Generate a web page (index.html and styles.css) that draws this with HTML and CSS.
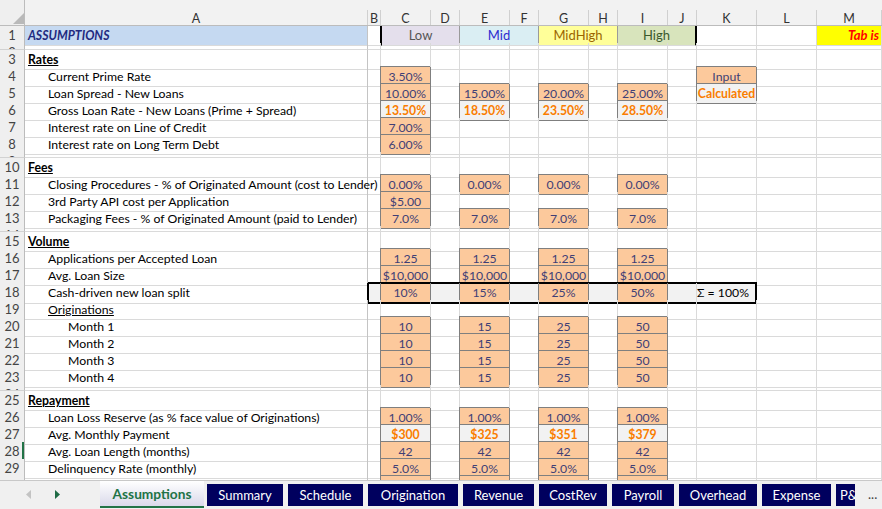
FILE: index.html
```html
<!DOCTYPE html>
<html lang="en">
<head>
  <meta charset="UTF-8">
  <title>Assumptions</title>
  <link rel="stylesheet" href="styles.css">
</head>
<body>
  <div class="sheet">
    <div class="row hdr">
      <span class="corner"><svg width="25" height="25" viewBox="0 0 25 25"><polygon points="13,24 24,24 24,13" fill="#b9b9b9"/></svg></span>
      <span>A</span><span>B</span><span>C</span><span>D</span><span>E</span><span>F</span><span>G</span><span>H</span><span>I</span><span>J</span><span>K</span><span>L</span><span>M</span>
    </div>

    <div class="row">
      <span>1</span><span class="title">ASSUMPTIONS</span><span></span>
      <span class="lo">Low</span><span class="mid">Mid</span><span class="midhigh">MidHigh</span><span class="high">High</span>
      <span></span><span></span><span class="note">Tab is for inputs</span>
    </div>
    <div class="row tiny first"><span>2</span><span></span><span></span><span></span><span></span><span></span><span></span><span></span><span></span><span></span><span></span><span></span><span></span><span></span></div>

    <!-- Rates -->
    <div class="row"><span>3</span><span class="h">Rates</span><span></span><span></span><span></span><span></span><span></span><span></span><span></span><span></span><span></span><span></span><span></span><span></span></div>
    <div class="row"><span>4</span><span class="l1">Current Prime Rate</span><span></span><span class="in">3.50%</span><span></span><span></span><span></span><span></span><span></span><span></span><span></span><span class="in">Input</span><span></span><span></span></div>
    <div class="row"><span>5</span><span class="l1">Loan Spread - New Loans</span><span></span><span class="in">10.00%</span><span></span><span class="in">15.00%</span><span></span><span class="in">20.00%</span><span></span><span class="in">25.00%</span><span></span><span class="calc">Calculated</span><span></span><span></span></div>
    <div class="row"><span>6</span><span class="l1">Gross Loan Rate - New Loans (Prime + Spread)</span><span></span><span class="calc">13.50%</span><span></span><span class="calc">18.50%</span><span></span><span class="calc">23.50%</span><span></span><span class="calc">28.50%</span><span></span><span></span><span></span><span></span></div>
    <div class="row"><span>7</span><span class="l1">Interest rate on Line of Credit</span><span></span><span class="in">7.00%</span><span></span><span></span><span></span><span></span><span></span><span></span><span></span><span></span><span></span><span></span></div>
    <div class="row"><span>8</span><span class="l1">Interest rate on Long Term Debt</span><span></span><span class="in">6.00%</span><span></span><span></span><span></span><span></span><span></span><span></span><span></span><span></span><span></span><span></span></div>
    <div class="row tiny"><span>9</span><span></span><span></span><span></span><span></span><span></span><span></span><span></span><span></span><span></span><span></span><span></span><span></span><span></span></div>

    <!-- Fees -->
    <div class="row"><span>10</span><span class="h">Fees</span><span></span><span></span><span></span><span></span><span></span><span></span><span></span><span></span><span></span><span></span><span></span><span></span></div>
    <div class="row"><span>11</span><span class="l1">Closing Procedures - % of Originated Amount (cost to Lender)</span><span></span><span class="in">0.00%</span><span></span><span class="in">0.00%</span><span></span><span class="in">0.00%</span><span></span><span class="in">0.00%</span><span></span><span></span><span></span><span></span></div>
    <div class="row"><span>12</span><span class="l1">3rd Party API cost per Application</span><span></span><span class="in">$5.00</span><span></span><span></span><span></span><span></span><span></span><span></span><span></span><span></span><span></span><span></span></div>
    <div class="row"><span>13</span><span class="l1">Packaging Fees - % of Originated Amount (paid to Lender)</span><span></span><span class="in">7.0%</span><span></span><span class="in">7.0%</span><span></span><span class="in">7.0%</span><span></span><span class="in">7.0%</span><span></span><span></span><span></span><span></span></div>
    <div class="row tiny"><span>14</span><span></span><span></span><span></span><span></span><span></span><span></span><span></span><span></span><span></span><span></span><span></span><span></span><span></span></div>

    <!-- Volume -->
    <div class="row"><span>15</span><span class="h">Volume</span><span></span><span></span><span></span><span></span><span></span><span></span><span></span><span></span><span></span><span></span><span></span><span></span></div>
    <div class="row"><span>16</span><span class="l1">Applications per Accepted Loan</span><span></span><span class="in">1.25</span><span></span><span class="in">1.25</span><span></span><span class="in">1.25</span><span></span><span class="in">1.25</span><span></span><span></span><span></span><span></span></div>
    <div class="row"><span>17</span><span class="l1">Avg. Loan Size</span><span></span><span class="in">$10,000</span><span></span><span class="in">$10,000</span><span></span><span class="in">$10,000</span><span></span><span class="in">$10,000</span><span></span><span></span><span></span><span></span></div>
    <div class="row"><span>18</span><span class="l1">Cash-driven new loan split</span><span class="g box bl"></span><span class="in box">10%</span><span class="g box"></span><span class="in box">15%</span><span class="g box"></span><span class="in box">25%</span><span class="g box"></span><span class="in box">50%</span><span class="g box"></span><span class="g box br">&Sigma; = 100%</span><span></span><span></span></div>
    <div class="row"><span>19</span><span class="l1 u">Originations</span><span></span><span></span><span></span><span></span><span></span><span></span><span></span><span></span><span></span><span></span><span></span><span></span></div>
    <div class="row"><span>20</span><span class="l2">Month 1</span><span></span><span class="in">10</span><span></span><span class="in">15</span><span></span><span class="in">25</span><span></span><span class="in">50</span><span></span><span></span><span></span><span></span></div>
    <div class="row"><span>21</span><span class="l2">Month 2</span><span></span><span class="in">10</span><span></span><span class="in">15</span><span></span><span class="in">25</span><span></span><span class="in">50</span><span></span><span></span><span></span><span></span></div>
    <div class="row"><span>22</span><span class="l2">Month 3</span><span></span><span class="in">10</span><span></span><span class="in">15</span><span></span><span class="in">25</span><span></span><span class="in">50</span><span></span><span></span><span></span><span></span></div>
    <div class="row"><span>23</span><span class="l2">Month 4</span><span></span><span class="in">10</span><span></span><span class="in">15</span><span></span><span class="in">25</span><span></span><span class="in">50</span><span></span><span></span><span></span><span></span></div>
    <div class="row tiny"><span>24</span><span></span><span></span><span></span><span></span><span></span><span></span><span></span><span></span><span></span><span></span><span></span><span></span><span></span></div>

    <!-- Repayment -->
    <div class="row"><span>25</span><span class="h">Repayment</span><span></span><span></span><span></span><span></span><span></span><span></span><span></span><span></span><span></span><span></span><span></span><span></span></div>
    <div class="row"><span>26</span><span class="l1">Loan Loss Reserve (as % face value of Originations)</span><span></span><span class="in">1.00%</span><span></span><span class="in">1.00%</span><span></span><span class="in">1.00%</span><span></span><span class="in">1.00%</span><span></span><span></span><span></span><span></span></div>
    <div class="row"><span>27</span><span class="l1">Avg. Monthly Payment</span><span></span><span class="calc">$300</span><span></span><span class="calc">$325</span><span></span><span class="calc">$351</span><span></span><span class="calc">$379</span><span></span><span></span><span></span><span></span></div>
    <div class="row"><span class="sel">28</span><span class="l1">Avg. Loan Length (months)</span><span></span><span class="in">42</span><span></span><span class="in">42</span><span></span><span class="in">42</span><span></span><span class="in">42</span><span></span><span></span><span></span><span></span></div>
    <div class="row"><span>29</span><span class="l1">Delinquency Rate (monthly)</span><span></span><span class="in">5.0%</span><span></span><span class="in">5.0%</span><span></span><span class="in">5.0%</span><span></span><span class="in">5.0%</span><span></span><span></span><span></span><span></span></div>
    <div class="row last"><span></span><span></span><span></span><span class="in"></span><span></span><span class="in"></span><span></span><span class="in"></span><span></span><span class="in"></span><span></span><span></span><span></span><span></span></div>
  </div>

  <div class="tabs">
    <span class="nav">
      <svg width="6" height="9" viewBox="0 0 6 9"><polygon points="5,0 5,9 0,4.5" fill="#c3c3c3"/></svg>
      <svg width="6" height="9" viewBox="0 0 6 9"><polygon points="0,0 0,9 5,4.5" fill="#1f6b45"/></svg>
    </span>
    <span class="tab active">Assumptions</span>
    <span class="tab">Summary</span>
    <span class="tab">Schedule</span>
    <span class="tab">Origination</span>
    <span class="tab">Revenue</span>
    <span class="tab">CostRev</span>
    <span class="tab">Payroll</span>
    <span class="tab">Overhead</span>
    <span class="tab">Expense</span>
    <span class="tab cut">P&amp;L</span>
    <span class="more">...</span>
  </div>
</body>
</html>
```

FILE: styles.css
```css
body {
  margin: 0;
  width: 882px;
  height: 509px;
  overflow: hidden;
  background: #fff;
  font-family: Lato, "Liberation Sans", sans-serif;
  font-size: 12.25px;
  color: #000;
}
.sheet {
  height: 480px;
  overflow: hidden;
}
.row {
  display: grid;
  grid-template-columns: 25px 343px 13px 50px 29px 50px 29px 50px 29px 50px 29px 60px 60px 65px;
  height: 17px;
}
.row > span {
  box-sizing: border-box;
  border-right: 1px solid #dadada;
  border-bottom: 1px solid #dadada;
  line-height: 19px;
  white-space: nowrap;
  text-align: center;
}
.row > span:first-child {
  background: #efefef;
  color: #444;
  font-size: 13px;
  border-right-color: #bcbcbc;
  border-bottom-color: #d2d2d2;
  overflow: hidden;
}
.row > span:nth-child(2) {
  border-right-color: #c4c4c4;
}
.row.tiny {
  height: 6px;
}
.row.tiny.first {
  height: 7px;
}
.row.tiny > span,
.row.last > span {
  overflow: hidden;
}
.row.last {
  height: 5px;
}
.row.last > span {
  border-bottom: none;
}

/* column letters */
.hdr {
  height: 26px;
  box-sizing: border-box;
  background: #f2f2f2;
  border-bottom: 1px solid #bcbcbc;
}
.hdr > span {
  align-self: end;
  height: 15px;
  line-height: 17px;
  border-bottom: none;
  border-right-color: #d0d0d0;
  color: #333;
  font-size: 12.5px;
}
.hdr > span:nth-child(2) {
  border-right-color: #d0d0d0;
}
.hdr > .corner {
  align-self: stretch;
  height: auto;
  background: #f2f2f2;
  border-bottom: none;
}
.corner svg {
  display: block;
}

/* row 1 */
.title,
.h,
.l1,
.l2 {
  text-align: left !important;
  padding-left: 3px;
}
.title {
  background: #c5d9f1;
  color: #1f2a80;
  font-weight: bold;
  font-style: italic;
}
.lo,
.mid,
.midhigh,
.high {
  grid-column: span 2;
  border-right-color: #9a9a9a !important;
  font-size: 13px;
}
.lo {
  background: #e4dfec;
  color: #555;
  border-left: 1px solid #000;
  box-shadow: -1px 0 #000;
}
.mid {
  background: #daeef3;
  color: #2b2bd0;
}
.midhigh {
  background: #ffff99;
  color: #9c6500;
}
.high {
  background: #d8e4bc;
  color: #3b5a2c;
  border-right: 2px solid #000 !important;
}
.note {
  background: #ffff00;
  color: #f00;
  font-weight: bold;
  font-style: italic;
  font-size: 13px;
  text-align: left !important;
  padding-left: 31px;
  overflow: hidden;
}

.h {
  font-weight: bold;
  text-decoration: underline;
}
.l1 {
  padding-left: 23px;
}
.l2 {
  padding-left: 43px;
}
.u {
  text-decoration: underline;
}

/* cell styles */
.in {
  background: #fcc99c;
  color: #3f3f76;
  border-color: #7f7f7f !important;
  box-shadow: -1px -1px 0 #7f7f7f;
}
.calc {
  background: #f2f2f2;
  color: #fa7d00;
  font-weight: bold;
  border-color: #7f7f7f !important;
  box-shadow: -1px -1px 0 #7f7f7f;
}
.g {
  background: #f2f2f2;
}
.row > .box {
  border-bottom: 2px solid #000 !important;
  box-shadow: 0 -1px #000, inset 0 1px #000;
}
.row > .in.box {
  box-shadow: 0 -1px #000, inset 0 1px #000, -1px 0 #7f7f7f;
}
.row > .bl {
  box-shadow: 0 -1px #000, inset 0 1px #000, -1px 0 #000, inset 1px 0 #000;
}
.row > .br {
  border-right: 2px solid #000;
  text-align: right;
  padding-right: 6px;
}
.row > .sel {
  background: #d4d4d4;
  color: #1d5b38;
  box-shadow: inset -2px 0 #217346;
}

/* sheet tabs */
.tabs {
  display: flex;
  align-items: flex-start;
  height: 29px;
  box-sizing: border-box;
  background: #f0f0f0;
  border-top: 1px solid #c8c8c8;
}
.tabs > * {
  flex: none;
}
.nav {
  width: 100px;
  height: 26px;
  display: flex;
  align-items: center;
  gap: 23px;
  padding-left: 26px;
  box-sizing: border-box;
}
.tab {
  margin-top: 3px;
  margin-right: 5px;
  height: 22px;
  line-height: 22px;
  background: #00005e;
  color: #fff;
  font-size: 13px;
  text-align: center;
  white-space: nowrap;
  overflow: hidden;
}
.tab:nth-child(3) { width: 76px; }
.tab:nth-child(4) { width: 75px; }
.tab:nth-child(5) { width: 90px; }
.tab:nth-child(6) { width: 71px; }
.tab:nth-child(7) { width: 68px; }
.tab:nth-child(8) { width: 62px; }
.tab:nth-child(9) { width: 78px; }
.tab:nth-child(10) { width: 69px; }
.tab.active {
  width: 104px;
  margin-top: 0;
  margin-right: 3px;
  height: 25px;
  line-height: 25px;
  background: linear-gradient(#ffffff, #d9d9ea);
  color: #217346;
  font-size: 13.7px;
  font-weight: bold;
  border-bottom: 2px solid #217346;
}
.tab.cut {
  width: 19px;
  padding-left: 4px;
  box-sizing: border-box;
  text-align: left;
}
.more {
  margin: 5px 0 0 8px;
  color: #444;
  font-size: 13px;
}
```
